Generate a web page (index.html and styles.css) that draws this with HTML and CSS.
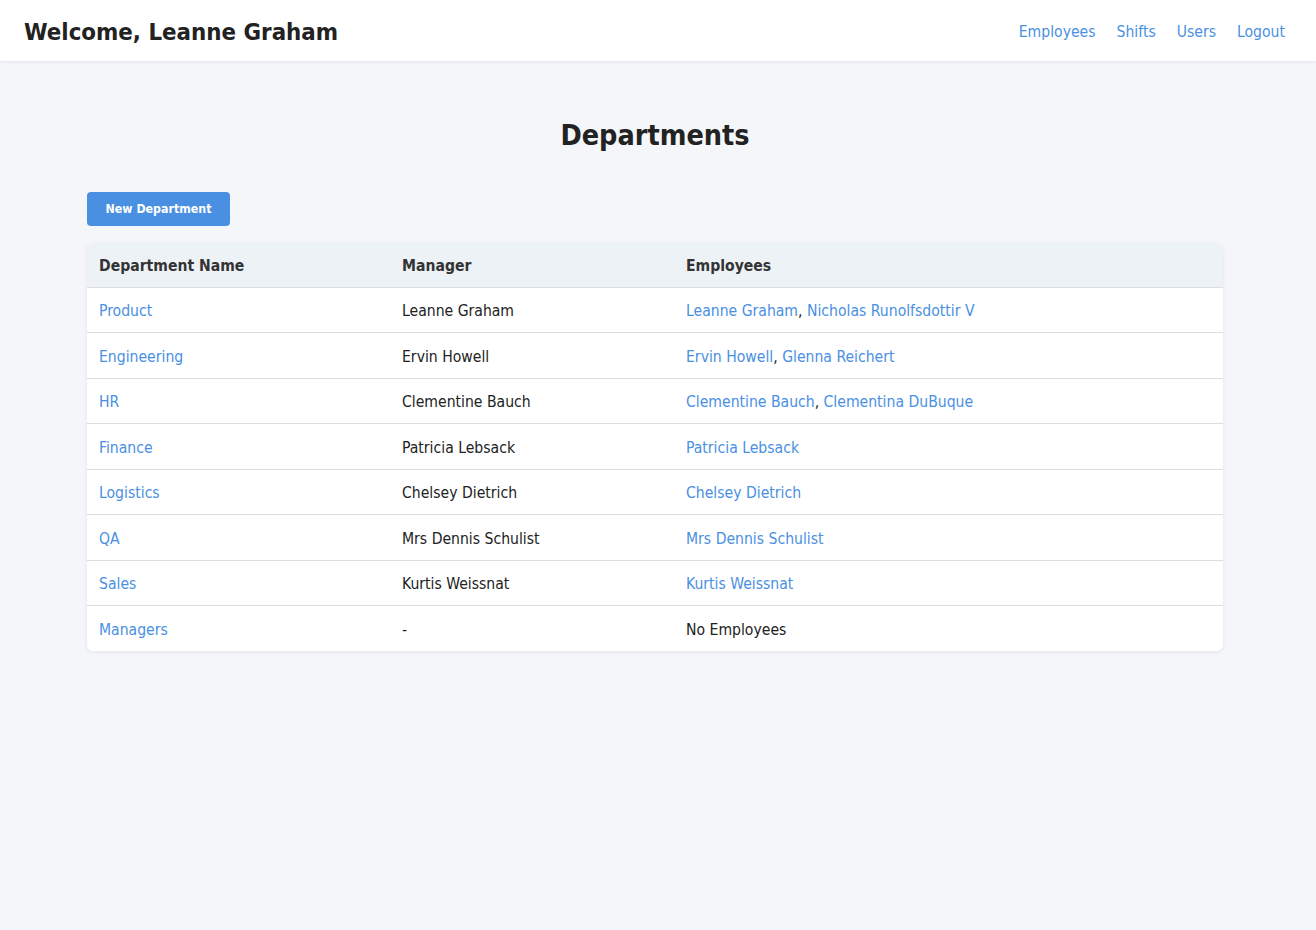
FILE: index.html
```html
<!DOCTYPE html>
<html lang="en">
<head>
<meta charset="utf-8">
<title>Departments</title>
<link rel="stylesheet" href="styles.css">
</head>
<body>
<header class="topbar">
  <h1 class="welcome">Welcome, Leanne Graham</h1>
  <nav class="nav">
    <a href="#">Employees</a>
    <a href="#">Shifts</a>
    <a href="#">Users</a>
    <a href="#">Logout</a>
  </nav>
</header>
<main class="page">
  <h2 class="title">Departments</h2>
  <button class="btn">New Department</button>
  <div class="card">
    <table class="table">
      <thead>
        <tr><th class="c1">Department Name</th><th class="c2">Manager</th><th>Employees</th></tr>
      </thead>
      <tbody>
        <tr><td><a href="#">Product</a></td><td>Leanne Graham</td><td><a href="#">Leanne Graham</a>, <a href="#">Nicholas Runolfsdottir V</a></td></tr>
        <tr><td><a href="#">Engineering</a></td><td>Ervin Howell</td><td><a href="#">Ervin Howell</a>, <a href="#">Glenna Reichert</a></td></tr>
        <tr><td><a href="#">HR</a></td><td>Clementine Bauch</td><td><a href="#">Clementine Bauch</a>, <a href="#">Clementina DuBuque</a></td></tr>
        <tr><td><a href="#">Finance</a></td><td>Patricia Lebsack</td><td><a href="#">Patricia Lebsack</a></td></tr>
        <tr><td><a href="#">Logistics</a></td><td>Chelsey Dietrich</td><td><a href="#">Chelsey Dietrich</a></td></tr>
        <tr><td><a href="#">QA</a></td><td>Mrs Dennis Schulist</td><td><a href="#">Mrs Dennis Schulist</a></td></tr>
        <tr><td><a href="#">Sales</a></td><td>Kurtis Weissnat</td><td><a href="#">Kurtis Weissnat</a></td></tr>
        <tr><td><a href="#">Managers</a></td><td>-</td><td>No Employees</td></tr>
      </tbody>
    </table>
  </div>
</main>
</body>
</html>
```
FILE: styles.css
```css
* { box-sizing: border-box; }
html, body { margin: 0; padding: 0; }
body {
  font-family: "DejaVu Sans Condensed", "DejaVu Sans", sans-serif;
  background: #f4f6f9;
  color: #222;
  min-height: 930px;
}
a { color: #4a90e2; text-decoration: none; }
.topbar {
  height: 61px;
  background: #fff;
  box-shadow: 0 1px 4px rgba(0,0,0,0.08);
  display: flex;
  align-items: center;
  justify-content: space-between;
  padding: 3px 31px 0 24px;
}
.welcome {
  margin: 0;
  font-size: 23.8px;
  font-weight: bold;
  color: #222;
}
.nav { display: flex; gap: 21px; font-size: 15.6px; }
.page {
  width: 1136px;
  margin: 0 auto;
  position: relative;
  left: -3px;
  padding-top: 57px;
}
.title {
  margin: 0 0 38px;
  text-align: center;
  font-size: 28.5px;
  font-weight: bold;
  color: #222;
  line-height: 36px;
}
.btn {
  display: block;
  width: 143px;
  height: 34px;
  border: 0;
  border-radius: 4px;
  background: #4a90e2;
  color: #fff;
  font-family: inherit;
  font-weight: bold;
  font-size: 12.3px;
  padding: 0;
  margin-bottom: 17px;
}
.card {
  background: #fff;
  border-radius: 6px;
  box-shadow: 0 1px 4px rgba(0,0,0,0.08);
  overflow: hidden;
}
.table {
  width: 100%;
  border-collapse: collapse;
  font-size: 15.6px;
}
.table th {
  background: #edf2f7;
  text-align: left;
  font-weight: bold;
  color: #333;
  height: 44px;
  padding: 2px 12px 0;
  border-bottom: 1px solid #ddd;
}
.table .c1 { width: 303px; }
.table .c2 { width: 284px; }
.table td {
  height: 45.5px;
  padding: 3px 12px 0;
  color: #222;
  border-bottom: 1px solid #ddd;
}
.table tbody tr:last-child td { border-bottom: 0; }
```
